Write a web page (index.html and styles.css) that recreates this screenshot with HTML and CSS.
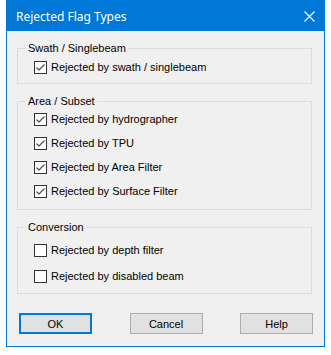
FILE: index.html
```html
<!DOCTYPE html>
<html lang="en">
<head>
  <meta charset="UTF-8">
  <title>Rejected Flag Types</title>
  <link rel="stylesheet" href="styles.css">
</head>
<body>
  <div class="window">
    <div class="titlebar">
      <span class="title">Rejected Flag Types</span>
      <svg class="close" width="11" height="11" viewBox="0 0 11 11">
        <path d="M0.5 0.5 L10.5 10.5 M10.5 0.5 L0.5 10.5" stroke="#fff" stroke-width="1.1" fill="none"/>
      </svg>
    </div>
    <div class="content">
      <fieldset class="group group-swath">
        <legend>Swath / Singlebeam</legend>
        <label class="check"><span class="box on"></span>Rejected by swath / singlebeam</label>
      </fieldset>
      <fieldset class="group group-area">
        <legend>Area / Subset</legend>
        <label class="check"><span class="box on"></span>Rejected by hydrographer</label>
        <label class="check"><span class="box on"></span>Rejected by TPU</label>
        <label class="check"><span class="box on"></span>Rejected by Area Filter</label>
        <label class="check"><span class="box on"></span>Rejected by Surface Filter</label>
      </fieldset>
      <fieldset class="group group-conv">
        <legend>Conversion</legend>
        <label class="check"><span class="box"></span>Rejected by depth filter</label>
        <label class="check"><span class="box"></span>Rejected by disabled beam</label>
      </fieldset>
      <div class="buttons">
        <button class="btn default">OK</button>
        <button class="btn">Cancel</button>
        <button class="btn">Help</button>
      </div>
    </div>
  </div>
</body>
</html>
```

FILE: styles.css
```css
body {
  margin: 0;
  background: #fff;
  font-family: "Liberation Sans", Arial, sans-serif;
  font-size: 11px;
  color: #000;
}
.window {
  margin-left: 6px;
  width: 319px;
  height: 347px;
  box-sizing: border-box;
  border: 1px solid #0078d7;
  background: #f0f0f0;
  display: flex;
  flex-direction: column;
}
.titlebar {
  height: 30px;
  background: #0078d7;
  display: flex;
  align-items: center;
  justify-content: space-between;
  padding: 0 9px 0 9px;
  color: #fff;
}
.title {
  font-family: "Noto Sans", "Open Sans", sans-serif;
  font-size: 12px;
}
.close {
  display: block;
  margin-top: 1px;
}
.content {
  padding: 11px 12px 0 10px;
  display: flex;
  flex-direction: column;
}
.group {
  margin: 0 0 11px 0;
  border: 1px solid #dcdcdc;
  padding: 0 0 0 16px;
  display: flex;
  flex-direction: column;
}
.group legend {
  margin-left: -8px;
  padding: 0 2px 0 2px;
  line-height: 13px;
  height: 13px;
}
.group-swath {
  padding-top: 6px;
  padding-bottom: 9px;
}
.group-area {
  padding-top: 5px;
  padding-bottom: 11px;
  gap: 11px;
}
.group-conv {
  padding-top: 10px;
  padding-bottom: 10px;
  gap: 13px;
}
.check {
  display: flex;
  align-items: center;
  height: 13px;
  line-height: 13px;
}
.box {
  width: 13px;
  height: 13px;
  box-sizing: border-box;
  border: 1px solid #333;
  background: #fff;
  margin-right: 4px;
  flex: none;
}
.box.on {
  background: #fff url("data:image/svg+xml;utf8,<svg xmlns='http://www.w3.org/2000/svg' width='11' height='11'><polyline points='1.5,5.5 4,8 9.5,2.5' fill='none' stroke='%23444' stroke-width='1.1'/></svg>") no-repeat center;
}
.buttons {
  display: flex;
  justify-content: space-between;
  margin: 8px -1px 0 2px;
}
.btn {
  width: 73px;
  height: 21px;
  box-sizing: border-box;
  border: 1px solid #adadad;
  background: #e1e1e1;
  font-family: "Liberation Sans", Arial, sans-serif;
  font-size: 11px;
  padding: 0;
  color: #000;
}
.btn.default {
  border: 2px solid #0078d7;
}
```
